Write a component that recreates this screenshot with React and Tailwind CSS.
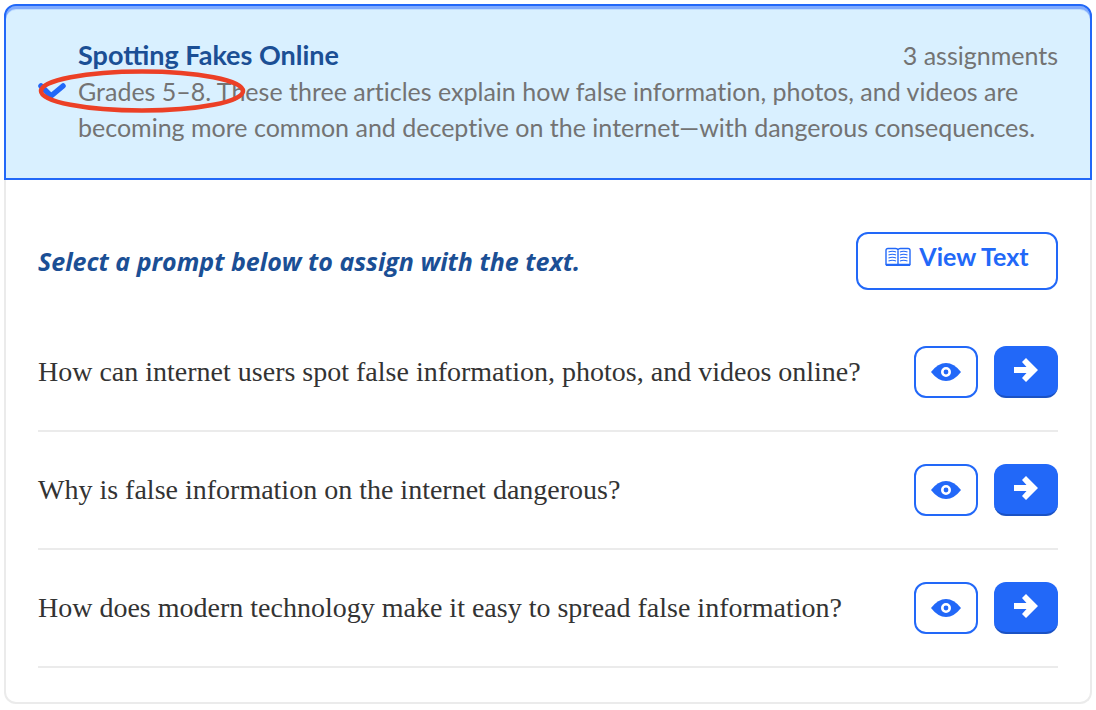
import React from "react";

const prompts = [
  "How can internet users spot false information, photos, and videos online?",
  "Why is false information on the internet dangerous?",
  "How does modern technology make it easy to spread false information?",
];

const CheckIcon = () => (
  <svg width="28" height="20" viewBox="0 0 28 20" fill="none" aria-hidden="true">
    <path
      d="M3 5L13 15L25 5"
      stroke="#2268f8"
      strokeWidth="5.500"
      strokeLinecap="round"
      strokeLinejoin="round"
    />
  </svg>
);

const BookIcon = () => (
  <svg
    width="26"
    height="20"
    viewBox="0 0 26 20"
    fill="none"
    stroke="currentColor"
    aria-hidden="true"
  >
    <path d="M13 3.500V17.500" strokeWidth="1.400" />
    <path
      d="M1 17.500V3.500Q1 1.500 3 1.500H10.500Q13 1.500 13 3.500Q13 1.500 15.500 1.500H23Q25 1.500 25 3.500V17.500Z"
      strokeWidth="1.400"
    />
    <path d="M1 18H25" strokeWidth="2" />
    <path
      d="M3.500 5Q7.500 3.500 11 5M3.500 8Q7.500 6.500 11 8M3.500 11Q7.500 9.500 11 11M3.500 14Q7.500 12.500 11 14M15 5Q18.500 3.500 22.500 5M15 8Q18.500 6.500 22.500 8M15 11Q18.500 9.500 22.500 11M15 14Q18.500 12.500 22.500 14"
      strokeWidth="1.100"
    />
  </svg>
);

const EyeIcon = () => (
  <svg width="30" height="18" viewBox="0 0 30 18" aria-hidden="true">
    <path d="M0 9Q7 0 15 0Q23 0 30 9Q23 18 15 18Q7 18 0 9Z" fill="currentColor" />
    <circle cx="15" cy="9" r="3.700" fill="none" stroke="white" strokeWidth="2.600" />
  </svg>
);

const ArrowIcon = () => (
  <svg width="24" height="24" viewBox="0 0 24 24" fill="currentColor" aria-hidden="true">
    <path d="M0 9H12.500L8 4L12 0L24 12L12 24L8 20L12.500 15H0Z" />
  </svg>
);

const PromptRow = ({ text }) => (
  <li className="flex items-center gap-4 border-b-2 border-[#ebebeb] py-8">
    <p className="flex-1 font-['Liberation_Serif',serif] text-[28px] leading-9 text-[#333]">
      {text}
    </p>
    <button
      type="button"
      aria-label="Preview prompt"
      className="flex h-[52px] w-16 items-center justify-center rounded-xl border-2 border-[#2268f8] bg-white text-[#2268f8]"
    >
      <EyeIcon />
    </button>
    <button
      type="button"
      aria-label="Assign prompt"
      className="flex h-[52px] w-16 items-center justify-center rounded-xl border-b-2 border-[#1b52c4] bg-[#2268f8] pb-0.5 text-white"
    >
      <ArrowIcon />
    </button>
  </li>
);

const App = () => {
  return (
    <main className="bg-white p-1 pb-1.5 font-['Lato',sans-serif]">
      <header className="flex h-44 items-center rounded-t-xl border-2 border-[#2268f8] bg-[#d9f0ff] pr-8 pb-0.5 pl-8 shadow-[inset_0_3px_0_#80aafd,inset_0_4px_0_#bddcff]">
        {/* Selected mark */}
        <div className="w-10 shrink-0">
          <CheckIcon />
        </div>
        <div className="relative flex-1">
          <div className="flex justify-between">
            <h1 className="text-[27px] leading-9 font-bold text-[#1b4f95]">
              Spotting Fakes Online
            </h1>
            <span className="text-[25px] leading-9 text-[#737373] [font-variant-ligatures:none]">
              3 assignments
            </span>
          </div>
          <p className="text-[25px] leading-9 text-[#737373] [font-variant-ligatures:none]">
            Grades 5–8. These three articles explain how false information, photos, and videos
            are becoming more common and deceptive on the internet—with dangerous consequences.
          </p>
          {/* Hand-drawn highlight around the grade range */}
          <svg
            className="absolute top-[30px] -left-10 h-12 w-[210px]"
            viewBox="0 0 210 48"
            fill="none"
            aria-hidden="true"
          >
            <ellipse cx="104" cy="24" rx="101" ry="19.500" stroke="#ec4026" strokeWidth="4.500" />
          </svg>
        </div>
      </header>

      <section className="rounded-b-xl border-2 border-t-0 border-[#ebebeb] px-8 pt-[52px] pb-[34px]">
        <div className="mb-6 flex items-center justify-between">
          <h2 className="font-['Open_Sans',sans-serif] text-[25px] leading-9 font-bold text-[#1b4f95] italic">
            Select a prompt below to assign with the text.
          </h2>
          <button
            type="button"
            className="flex h-[58px] w-[202px] items-center justify-center gap-2 rounded-xl border-2 border-[#2268f8] pb-2 text-[25px] font-bold text-[#2268f8]"
          >
            <BookIcon />
            View Text
          </button>
        </div>
        <ul>
          {prompts.map((prompt) => (
            <PromptRow key={prompt} text={prompt} />
          ))}
        </ul>
      </section>
    </main>
  );
};

export default App;
